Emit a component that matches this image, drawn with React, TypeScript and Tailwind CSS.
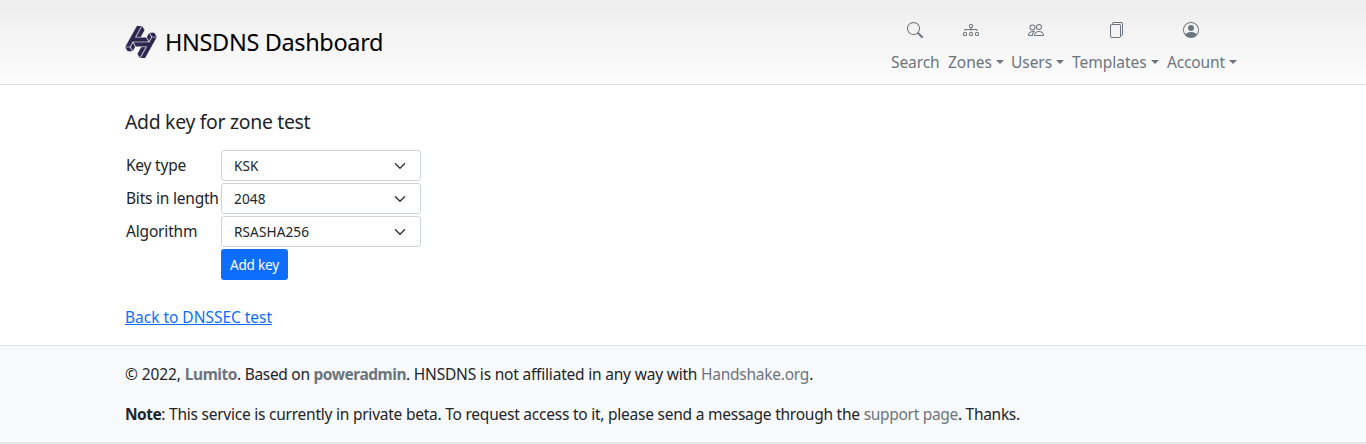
import type { ReactNode } from "react";
import { BsSearch, BsDiagram3, BsPeople, BsFiles, BsPersonCircle } from "react-icons/bs";
import { SiHandshakeProtocol } from "react-icons/si";

function Caret() {
  return <span className="ml-1 h-0 w-0 border-x-[4.8px] border-t-[4.8px] border-x-transparent border-t-[#6c757d]" />;
}

function NavItem({ width, offset, label, caret, children }: { width: string; offset: string; label: ReactNode; caret?: boolean; children: ReactNode }) {
  return (
    <a href="#" className={"flex flex-col " + width}>
      <span className={"flex h-4 text-[16px] " + offset}>{children}</span>
      <span className="mt-3 flex h-6 items-center whitespace-nowrap">
        {label}
        {caret && <Caret />}
      </span>
    </a>
  );
}

function Select({ value }: { value: string }) {
  return (
    <button className="flex h-[31px] w-[200px] items-center justify-between rounded-[3px] border border-[#ced4da] bg-white pr-[14px] pl-3 text-[13.6px] tracking-[0.1px] text-[#212529]">
      {value}
      <svg className="h-3 w-3" viewBox="0 0 16 16" fill="none" stroke="#343a40" strokeWidth="2" strokeLinecap="round" strokeLinejoin="round">
        <path d="m2 5 6 6 6-6" />
      </svg>
    </button>
  );
}

export default function App() {
  return (
    <div className="flex h-[444px] flex-col bg-[linear-gradient(to_bottom,#eeeeee_0,#ffffff_100px)] font-['Noto_Sans',sans-serif] text-[15.5px] leading-6 tracking-[-0.22px] text-[#212529]">
      <header className="flex h-[85px] shrink-0 border-b border-[#dee2e6] pl-[125px]">
        <a href="#" className="flex w-[766px] items-center text-black">
          <SiHandshakeProtocol className="h-8 w-8 stroke-[#2d2650] stroke-[0.35] text-[#2d2650]" />
          <span className="ml-2 text-[23.5px] leading-8 tracking-[-0.36px]">HNSDNS Dashboard</span>
        </a>
        <nav className="flex pt-[22px] text-[#6c757d]">
          <NavItem width="w-[56px]" offset="ml-4" label={<span className="tracking-[-0.1px]">Search</span>}><BsSearch /></NavItem>
          <NavItem width="w-[64px]" offset="ml-4" label={<span className="pl-px tracking-[0px]">Zones</span>} caret><BsDiagram3 /></NavItem>
          <NavItem width="w-[61px]" offset="ml-[17px]" label={<span className="tracking-[-0.05px]">Users</span>} caret><BsPeople /></NavItem>
          <NavItem width="w-[95px]" offset="ml-9" label={<span className="tracking-[0px]">Templates</span>} caret><BsFiles /></NavItem>
          <NavItem width="w-[75px]" offset="ml-4" label={<span className="tracking-[-0.15px]">Account</span>} caret><BsPersonCircle /></NavItem>
        </nav>
      </header>

      <main className="flex h-[260px] shrink-0 flex-col items-start bg-white pt-[25px] pl-[125px]">
        <h5 className="text-[19.4px] leading-6 tracking-[-0.3px]">Add key for zone test</h5>
        <form className="mt-4 grid grid-cols-[95px_200px] items-center gap-x-px gap-y-0.5">
          <label className="-mt-0.5 pl-px">Key type</label>
          <Select value="KSK" />
          <label className="-mt-0.5 pl-px whitespace-nowrap">Bits in length</label>
          <Select value="2048" />
          <label className="-mt-0.5 pl-px tracking-[-0.18px]">Algorithm</label>
          <Select value="RSASHA256" />
          <span />
          <button className="h-[31px] w-[67px] rounded-[3px] bg-[#0d6efd] text-[13.6px] text-white">Add key</button>
        </form>
        <a href="#" className="mt-[25px] tracking-[-0.02px] text-[#0d6efd] underline">Back to DNSSEC test</a>
      </main>

      <footer className="h-[98px] shrink-0 border-y border-[#dee2e6] bg-[#f8f9fa] pt-4 pl-[125px] whitespace-nowrap">
        <p>
          <span className="tracking-[-0.1px]">© 2022, </span>
          <a href="#" className="font-bold tracking-[-0.44px] text-[#6c757d]">Lumito</a>
          <span className="tracking-[-0.3px]">. Based on </span>
          <a href="#" className="font-bold tracking-[-0.46px] text-[#6c757d]">poweradmin</a>
          <span className="tracking-[-0.2px]">. HNSDNS is not affiliated in any way with </span>
          <a href="#" className="tracking-[-0.25px] text-[#6c757d]">Handshake.org</a>.
        </p>
        <p className="mt-4">
          <b className="tracking-[-0.5px]">Note</b>
          <span className="tracking-[-0.235px]">: This service is currently in private beta. To request access to it, please send a message through the </span>
          <a href="#" className="tracking-[-0.3px] text-[#6c757d]">support page</a>
          <span className="tracking-[-0.3px]">. Thanks.</span>
        </p>
      </footer>
      <div className="h-px bg-[#eeeeee]" />
    </div>
  );
}
